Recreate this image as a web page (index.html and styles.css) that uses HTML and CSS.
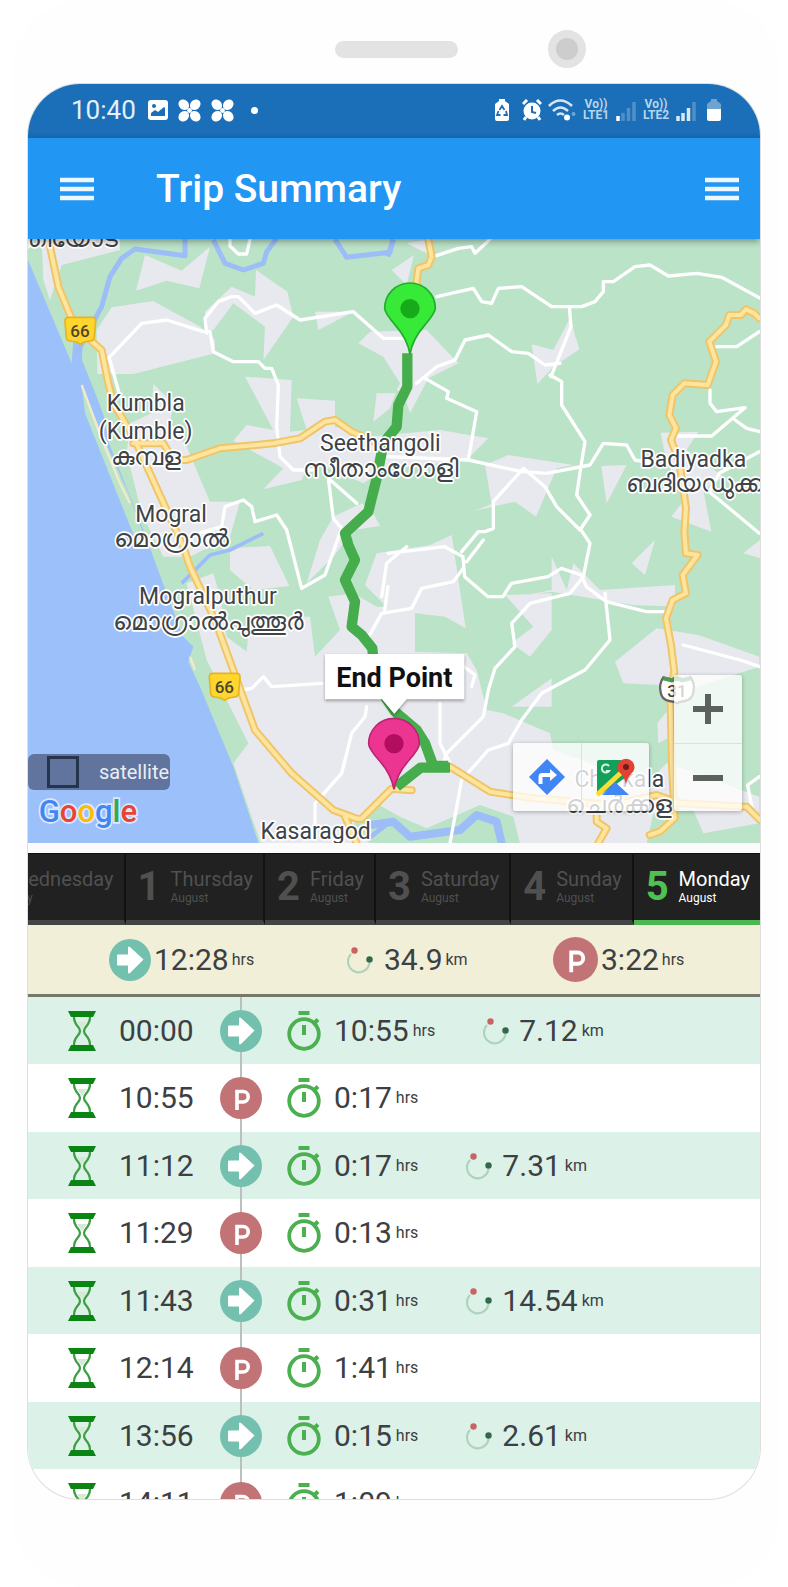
FILE: index.html
```html
<!DOCTYPE html>
<html lang="en">
<head>
<meta charset="utf-8">
<meta name="viewport" content="width=device-width, initial-scale=1">
<title>Trip Summary</title>
<link rel="stylesheet" href="styles.css">
</head>
<body>
<svg class="sprite" aria-hidden="true">
  <symbol id="menu" viewBox="0 0 34 24"><path d="M0 3h34M0 12h34M0 21h34" stroke="#fff" stroke-opacity=".92" stroke-width="4.4"/></symbol>
  <symbol id="move" viewBox="0 0 42 42"><circle cx="21" cy="21" r="21" fill="#74c0ae"/><path d="M8 16.500q0-1 1-1h10v-7q.5-1.500 2-.5l13.500 12.500-13.500 13.500q-1.500 1-2-.5v-7H9q-1 0-1-1z" fill="#fff"/></symbol>
  <symbol id="park" viewBox="0 0 42 42"><circle cx="21" cy="21" r="21" fill="#c27376"/><path d="M17 33V14.500h6a5 5 0 0 1 0 10.500h-6" fill="none" stroke="#fff" stroke-width="3.600"/></symbol>
  <symbol id="glass" viewBox="0 0 28 40"><path d="M0 0h28l-3 6H3zM0 40h28l-3-6H3z" fill="#0a8412"/><path d="M6 6c0 9 6 9 6 14s-6 5-6 14M22 6c0 9-6 9-6 14s6 5 6 14" fill="none" stroke="#3f9f45" stroke-width="2.300"/><path d="M9 11h10l-5 7z" fill="#d5e9d5"/></symbol>
  <symbol id="watch" viewBox="0 0 34 40"><circle cx="17" cy="23" r="14.800" fill="none" stroke="#4caf50" stroke-width="3.800"/><path d="M11.500 2h11M17 14v10M27 12.500l4-4" stroke="#4caf50" stroke-width="4"/></symbol>
  <symbol id="route" viewBox="0 0 26 28"><path d="M4 8A10.800 10.800 0 1 0 22.500 17" fill="none" stroke="#aed3bc" stroke-width="2.200"/><circle cx="7.500" cy="4.500" r="3.200" fill="#cb6363"/><circle cx="22.500" cy="13.500" r="3.200" fill="#32694b"/></symbol>
  <symbol id="clover" viewBox="0 0 24 24"><g fill="#fff"><ellipse cx="6" cy="6" rx="5" ry="6" transform="rotate(-45 6 6)"/><ellipse cx="18" cy="6" rx="5" ry="6" transform="rotate(45 18 6)"/><ellipse cx="6" cy="18" rx="5" ry="6" transform="rotate(45 6 18)"/><ellipse cx="18" cy="18" rx="5" ry="6" transform="rotate(-45 18 18)"/><circle cx="12" cy="12" r="2.500"/></g></symbol>
</svg>

<div class="phone">
  <div class="bezel"><span class="speaker"></span><span class="camera"></span></div>
  <main class="screen">
    <div class="status">
      <span class="clock">10:40</span>
      <svg class="st-image" viewBox="0 0 20 20"><rect width="20" height="20" rx="3" fill="#fff"/><circle cx="6" cy="6" r="2" fill="#1a6fb8"/><path d="M3 16v-3l4-3 3 2 6-5 1 1v8z" fill="#1a6fb8"/></svg>
      <svg class="st-clover"><use href="#clover"/></svg>
      <svg class="st-clover"><use href="#clover"/></svg>
      <span class="more-dot"></span>
      <div class="status-right">
        <svg class="w16" viewBox="0 0 16 22"><path d="M5 0h6v2l4 3v15q0 2-2 2H3q-2 0-2-2V5l4-3z" fill="#fff"/><path d="M5.500 11L8 7l2.500 4M12 12l1 4H9.500M6.500 16H3l1.500-4" fill="none" stroke="#1a6fb8" stroke-width="1.800"/></svg>
        <svg class="w20" viewBox="0 0 20 22"><circle cx="10" cy="12" r="8.500" fill="#fff"/><path d="M1 5l4-4M19 5l-4-4M4 18l-2 3M16 18l2 3" stroke="#fff" stroke-width="3"/><path d="M10 7v6l4 1" fill="none" stroke="#1a6fb8" stroke-width="2"/></svg>
        <svg class="w28" viewBox="0 0 28 22"><g fill="none" stroke="#d5e5f3" stroke-width="2.600"><path d="M1 7q11-11 23 0"/><path d="M5 12q7.500-7 15 0"/><path d="M9 16q3.500-3 7 0"/></g><circle cx="19" cy="18.500" r="3" fill="#fff"/><circle cx="25.500" cy="15" r="2" fill="#6fa5d3"/></svg>
        <span class="lte"><b>Vo))</b><b>LTE1</b></span>
        <svg class="w20" viewBox="0 0 20 22"><path d="M2 17v5" stroke="#fff" stroke-width="3.500"/><path d="M7 14v8M12.500 9v13M18 3v19" stroke="#528fc6" stroke-width="3.500"/></svg>
        <span class="lte"><b>Vo))</b><b>LTE2</b></span>
        <svg class="w20" viewBox="0 0 20 22"><path d="M2 17v5M7 14v8M12.500 9v13" stroke="#dbe8f4" stroke-width="3.500"/><path d="M18 3v19" stroke="#528fc6" stroke-width="3.500"/></svg>
        <svg class="w16 battery" viewBox="0 0 16 22"><path d="M5 0h6v2l4 3v5H1V5l4-3z" fill="#6fa3d0"/><path d="M1 10h14v10q0 2-2 2H3q-2 0-2-2z" fill="#fff"/></svg>
      </div>
    </div>

    <header class="appbar">
      <button class="menu" aria-label="Open navigation"><svg><use href="#menu"/></svg></button>
      <h1>Trip Summary</h1>
      <button class="menu" aria-label="Options"><svg><use href="#menu"/></svg></button>
    </header>

    <section class="map" aria-label="Trip map">
      <svg class="map-canvas" viewBox="84 27 2196 1812" preserveAspectRatio="xMidYMid slice">
        <defs>
          <g id="highways">
            <path d="M150 50l25 120 50 120 80 70 20 100 15 60 60 100 50 110 100 220 20 60 75 160 120 330 110 130 125 110 70 26h15l90-90 60 5M400 640h90l30 50h40l100-35 160-15 80-15 75-50 30-5 50 35 80 35M1035 1760l35 80M1285 28l10 52-10 25-30 10-6 45 20 30M2278 265l-15-15-25-12-15 17h-35l-10 30-50 50 20 60-25 70-70-5-35 35-10 60 20 40-15 35 25 65 20 140-5 70 5 65 35 5-45 60 10 55-40 20-20 55 15 80 10 80-12 60 5 220 8 160-45 40-30 10"/>
            <path d="M1350 1610l120 75 130 20 240 20 130-30 70 25 200 10 40 40M1790 1755v20l30 20-25 44"/>
          </g>
        </defs>
        <rect x="84" y="27" width="2196" height="1812" fill="#bbe3c8"/>
        <g fill="#e8e9ee">
          <path d="M435 75l110 47 85-72-32 125-98-23-92 30zM125 28h235v32l-175 45-35 105-20-60z"/>
          <path d="M335 232l125-19 140 77 45 40v40l-245 62H292l-2-132zM615 245l80-75 70 30 3-80 94 65 18 75-90 130 5-100-95-70-60 80h-25zM945 245h115l-105 55z"/>
          <path d="M1075 340l35-35 170-5 95 100-90 45-55 105-20-60-20-10-20 55-50 40 10-85h55l15-30-50-80zM1175 120l67-45-22 90zM1220 40l70-12v47z"/>
          <path d="M735 440l140 10-5 155 50-5-30-95 115 7v78l95 30 220-20 145 25-65 65-250 30-60 40-160-70-25 60-115 28 60-63-150-83 40-47 80 15z"/>
          <path d="M460 462l60 58-10 60 50 70 70 165h90l-30 105-120 60-80 0-65-130-45-180 10-90 65-30z"/>
          <path d="M1085 820l30 20 25 48-80 12-60 80-80 80 40-130 40-70z"/>
          <path d="M1455 705l70-30 195 30-50 10-62 145-63-45-120 27 50-20zM1595 343l65 17 50-95 28 93-78 52-48 52zM1804 708l76-3-60 115z"/>
          <path d="M1982 608l113-3-35 55 110 80-60 40 24 125-120-45 46-60-60-100z"/>
          <path d="M690 955l120-7 58 120-108 12-70-60zM1095 1065l35-95 160-25 65-30 15 100 27 180-62-35-166-20z"/>
          <path d="M1655 980l45 100 20-80 80 80 225-15v65l-125-5-245-40-75 10 75-15zM1515 1095l140-5v110l-65 80-55-40 65-50zM1535 1430l120-85v85zM1845 1295l125-100 125 20 183 65v30l-188 60-220-10zM1895 1000l70-70-30 105zM2230 970l50-40v55zM1972 1480l48-60-10 100-35 20z"/>
          <path d="M700 1600l45-60-125-250-60-230 80-30 20 70 20 120 60 45 10-105h180l15 120 75-80-35-100 75-10 70 40h115v135l155 5 30 50 30 120 50 10 140 60 10 50 140 50 160 30 40-40 60 20 218 80v80l-168 30-30-70-120 10-20 89H782z"/>
        </g>
        <path d="M1055 1790l65-75 80 45 80 35 160-70 100 35 20 79H1110z" fill="#bbe3c8"/>
        <path d="M84 90l131 310 5-70h28l-2 60 44 110 22 60 15 80 103 260 70 190 50 130 30 30-15 45 35 75 100 240 82 249H84z" fill="#9cc0f9"/>
        <path d="M245 465l55 135 85 190 60 160h-30l-80-200-80-200z" fill="#bbe3c8"/>
        <path d="M245 465l50 135 65 160 30 60M570 1280l15 40" fill="none" stroke="#f2eacb" stroke-width="7"/>
        <g fill="none" stroke="#9cbdf8" stroke-width="15" stroke-linejoin="round">
          <path d="M230 370l75-140 25-90 35-55 40-28 150 20V28M640 30l35 70 55 20 60-20 10-35 30-40M1005 28l35 54 130-15 10-39M1164 80l15-52"/>
          <path d="M545 1060l85-85 60-15 100-50" stroke-width="11"/>
          <path d="M1110 1785l70-10 50 45 150-20 50-45 60 20 20 85" stroke-width="24"/>
          <path d="M1100 1830l70-55" stroke-width="14"/>
        </g>
        <g fill="none" stroke="#fff" stroke-width="10" stroke-linejoin="round" stroke-linecap="round">
          <path d="M325 385l100-105 75-10 110 35h20l10 60 60 30h75l20 20h20l20 50-5 125 10 90 40 40h60M620 310l-5-45 40-50 40-15h20l50 50 65-25 70 45 160-25 90 80h60M690 28v20l25 24h25l10-44"/>
          <path d="M1300 80l75-25 40-5 10 20 45-42M1310 200l110-25 25 40 30 5 20-45 70-5 90 60h90l40-15 25-30v-30h30l65-45 45-5 55 33 85-8 75 12 120 65M1708 230l5 60-60 150M1250 460l60-50 55-20 30-60 70-15 70 50 50 5 50 35 45-5"/>
          <path d="M1275 445l70 40-5 20 90 40-25 145-240-10M1405 690l160 35 75 5 130-25 40-65 70 5 25 45 60 10M1650 435l35 20v70l70 110-10 60-15 100 40 60-30 45-70-70-35-60-65-55-90 100v80l-25 10h-20l-50 60"/>
          <path d="M2150 350h60l68-45M2130 480v40l20 25 85-12-100 85h-105M2205 570l35 25 40 10M2278 665l-120 65-30 55 150 125M1070 820l-85-75 15 120 25 30-50 140-70 40-45-175-30-45-65 20-10-45-25-20-55 20-10 60-70 20M330 390l30 110"/>
          <path d="M1164 970l170-20 55 30 5 60 70 60h45l25-40 110-20 40-25 60 20 15 35 60 45 120 30h60M1740 895l30 45-20 100-40 50-120 30-55 60 10 70-60 65-20 65-15 80-110 110-15 40M1815 1090l15 140-75 90-130 70-60 80-40 70-60 20-80 90-35 190M1390 1015l-30 40-95 20-30 60-90 15-50 90M1450 930l-50 65M1145 1100l15-100 60-50M1164 1070l-10 70M725 1380l30-5 35-35 25 30 150-10M1100 1430l-5 30-40 50-30 120-80 90v90M1320 1420v120l30 60M1380 1300l45 35-10 35M2050 1245l170 45 60 20M2278 1640l-35 25 15 80"/>
        </g>
        <use href="#highways" class="highway-edge"/>
        <use href="#highways" class="highway-core"/>
        <path d="M1222 370V470L1195 525 1190 590 1150 640 1130 745 1105 845 1035 910 1045 945 1065 990 1035 1050 1065 1115 1055 1190 1085 1215 1117 1255 1120 1290M1155 1400L1185 1445 1250 1500 1275 1540 1300 1608H1345M1190 1670L1262 1613H1350" fill="none" stroke="#45ad4b" stroke-width="31" stroke-linejoin="round"/>

        <g class="shield"><path d="M206 262h70q12 0 11 12l-4 48q-1 10-12 11l-18 3-12 7-12-7-18-3q-11-1-12-11l-4-48q-1-12 11-12z"/><text x="240" y="322">66</text></g>
        <g class="shield"><path d="M639 1330h70q12 0 11 12l-4 48q-1 10-12 11l-18 3-12 7-12-7-18-3q-11-1-12-11l-4-48q-1-12 11-12z"/><text x="673" y="1390">66</text></g>
        <path d="M1990 1342l25 6 16-6 16 6 25-6q14 20 8 45-3 22-26 26-15 2-23 7-8-5-23-7-23-4-26-26-6-25 8-45z" fill="#fff" stroke="#666" stroke-width="7"/>
        <path d="M1990 1345l25 6 16-6 16 6 25-6" fill="none" stroke="#4f9a4c" stroke-width="12"/>
        <text x="2031" y="1402" class="us-road">31</text>

        <g class="place">
          <text x="355" y="52" text-anchor="end" class="ml">ബന്തിയോട</text>
          <text x="437" y="543">Kumbla</text><text x="437" y="627">(Kumble)</text><text x="437" y="705" class="ml">കുമ്പള</text>
          <text x="513" y="877">Mogral</text><text x="513" y="950" class="ml">മൊഗ്രാൽ</text>
          <text x="1141" y="663">Seethangoli</text><text x="1141" y="740" class="ml">സീതാംഗോളി</text>
          <text x="624" y="1123">Mogralputhur</text><text x="624" y="1200" class="ml">മൊഗ്രാൽപുത്തൂർ</text>
          <text x="2080" y="712">Badiyadka</text><text x="2082" y="785" class="ml">ബദിയഡുക്ക</text>
          <text x="947" y="1828">Kasaragod</text>
          <text x="1858" y="1672">Cherkala</text><text x="1858" y="1750" class="ml">ചെർക്കള</text>
        </g>
        <text x="116" y="1776" class="brand"><tspan fill="#4285f4">G</tspan><tspan fill="#ea4335">o</tspan><tspan fill="#fbbc05">o</tspan><tspan fill="#4285f4">g</tspan><tspan fill="#34a853">l</tspan><tspan fill="#ea4335">e</tspan></text>

        <path d="M1230 372q-8-45-43-85-33-38-33-52a76 76 0 0 1 152 0q0 14-33 52-35 40-43 85z" fill="#37ea38" stroke="#20ad2a" stroke-width="5"/>
        <circle cx="1230" cy="236" r="29" fill="#17aa1b"/>
        <path d="M1182 1678q-8-45-43-85-33-38-33-52a76 76 0 0 1 152 0q0 14-33 52-35 40-43 85z" fill="#ec3591" stroke="#bd2474" stroke-width="5"/>
        <circle cx="1182" cy="1541" r="29" fill="#b30d60"/>
        <path class="callout" d="M975 1272h418v136h-173l-37 44-37-44H975z"/>
        <text x="1183" y="1372" class="callout-text">End Point</text>
      </svg>

      <label class="satellite"><input type="checkbox"><span>satellite</span></label>
      <div class="map-links">
        <button aria-label="Directions"><svg viewBox="0 0 36 36"><path d="M18 0l18 18-18 18L0 18z" fill="#4285f4"/><path d="M11.500 25v-7q0-2 2-2h10" fill="none" stroke="#fff" stroke-width="4"/><path d="M21 10l7 6-7 6z" fill="#fff"/></svg></button>
        <button aria-label="Open in Google Maps"><svg class="gmaps" viewBox="0 0 40 40"><path d="M1 5q0-2 2-2h22l7 16L4 38q-3 0-3-3z" fill="#12a05b"/><path d="M19 25l14 13H6z" fill="#4285f4"/><path d="M1 38l28-26" stroke="#fddd35" stroke-width="5"/><path d="M13 9a4 4 0 1 0 0 5h-3" fill="none" stroke="#d7f4e3" stroke-width="2"/><path d="M30 28q-1-7-5-11a8.500 8.500 0 1 1 10 0q-4 4-5 11z" fill="#e34133"/><circle cx="30" cy="10" r="3" fill="#6e1b1d"/></svg></button>
      </div>
      <div class="zoom">
        <button aria-label="Zoom in"><svg viewBox="0 0 30 30"><path d="M15 0v30M0 15h30" stroke="#5d615e" stroke-width="6"/></svg></button>
        <button aria-label="Zoom out"><svg viewBox="0 0 30 30"><path d="M0 15h30" stroke="#5d615e" stroke-width="6"/></svg></button>
      </div>
    </section>

    <nav class="days" aria-label="Day">
      <button class="day"><b>31</b><span>Wednesday<small>July</small></span></button>
      <button class="day"><b>1</b><span>Thursday<small>August</small></span></button>
      <button class="day"><b>2</b><span>Friday<small>August</small></span></button>
      <button class="day"><b>3</b><span>Saturday<small>August</small></span></button>
      <button class="day"><b>4</b><span>Sunday<small>August</small></span></button>
      <button class="day active" aria-current="date"><b>5</b><span>Monday<small>August</small></span></button>
    </nav>

    <section class="totals" aria-label="Totals">
      <div class="total"><svg class="badge"><use href="#move"/></svg><span class="value">12:28</span><small>hrs</small></div>
      <div class="total distance"><svg class="route"><use href="#route"/></svg><span class="value">34.9</span><small>km</small></div>
      <div class="total"><svg class="badge parked"><use href="#park"/></svg><span class="value">3:22</span><small>hrs</small></div>
    </section>

    <ul class="trips">
      <li><svg class="glass"><use href="#glass"/></svg><time>00:00</time><span class="stop"><svg class="badge"><use href="#move"/></svg></span><svg class="watch"><use href="#watch"/></svg><span class="value">10:55</span><small>hrs</small><svg class="route"><use href="#route"/></svg><span class="value">7.12</span><small>km</small></li>
      <li><svg class="glass"><use href="#glass"/></svg><time>10:55</time><span class="stop"><svg class="badge"><use href="#park"/></svg></span><svg class="watch"><use href="#watch"/></svg><span class="value">0:17</span><small>hrs</small></li>
      <li><svg class="glass"><use href="#glass"/></svg><time>11:12</time><span class="stop"><svg class="badge"><use href="#move"/></svg></span><svg class="watch"><use href="#watch"/></svg><span class="value">0:17</span><small>hrs</small><svg class="route"><use href="#route"/></svg><span class="value">7.31</span><small>km</small></li>
      <li><svg class="glass"><use href="#glass"/></svg><time>11:29</time><span class="stop"><svg class="badge"><use href="#park"/></svg></span><svg class="watch"><use href="#watch"/></svg><span class="value">0:13</span><small>hrs</small></li>
      <li><svg class="glass"><use href="#glass"/></svg><time>11:43</time><span class="stop"><svg class="badge"><use href="#move"/></svg></span><svg class="watch"><use href="#watch"/></svg><span class="value">0:31</span><small>hrs</small><svg class="route"><use href="#route"/></svg><span class="value">14.54</span><small>km</small></li>
      <li><svg class="glass"><use href="#glass"/></svg><time>12:14</time><span class="stop"><svg class="badge"><use href="#park"/></svg></span><svg class="watch"><use href="#watch"/></svg><span class="value">1:41</span><small>hrs</small></li>
      <li><svg class="glass"><use href="#glass"/></svg><time>13:56</time><span class="stop"><svg class="badge"><use href="#move"/></svg></span><svg class="watch"><use href="#watch"/></svg><span class="value">0:15</span><small>hrs</small><svg class="route"><use href="#route"/></svg><span class="value">2.61</span><small>km</small></li>
      <li><svg class="glass"><use href="#glass"/></svg><time>14:11</time><span class="stop"><svg class="badge"><use href="#park"/></svg></span><svg class="watch"><use href="#watch"/></svg><span class="value">1:09</span><small>hrs</small></li>
    </ul>
  </main>
</div>
</body>
</html>
```
FILE: styles.css
```css
* { box-sizing: border-box; }
body { margin: 0; background: #fff; font-family: Roboto, "Noto Sans", sans-serif; color: #3c4043; }
button { border: 0; padding: 0; background: none; font: inherit; color: inherit; }
svg { display: block; flex: none; }
.sprite { position: absolute; width: 0; height: 0; }

.phone { margin: 0 8px 0 12px; padding: 0 20px 88px 16px; border-radius: 72px; background: #fefefe; }
.bezel { height: 84px; padding: 30px 174px 0 0; display: flex; justify-content: flex-end; align-items: flex-start; gap: 90px; }
.speaker { width: 123px; height: 17px; margin-top: 11px; border-radius: 9px; background: #e3e3e3; }
.camera { width: 38px; height: 38px; border-radius: 50%; border: 8px solid #e3e3e3; background: #cdcdcd; }
.screen { overflow: hidden; border-radius: 52px; box-shadow: 0 0 0 1px #dedede; background: #fff; }

.status { height: 54px; padding: 0 38px 2px 43px; display: flex; align-items: center; background: #1a6fb8; color: #e6f0f8; }
.clock { font-size: 26px; }
.st-image { width: 20px; height: 20px; margin-left: 12px; }
.st-clover { width: 23px; height: 23px; margin-left: 10px; }
.more-dot { width: 7px; height: 7px; margin-left: 17px; border-radius: 50%; background: #fff; }
.status-right { margin-left: auto; display: flex; align-items: center; gap: 6px; }
.status-right svg { height: 22px; }
.w16 { width: 16px; margin-right: 6px; }
.w20 { width: 20px; }
.w28 { width: 28px; }
.status-right .battery { margin: 0 0 0 4px; }
.lte { width: 28px; display: flex; flex-direction: column; align-items: center; font-size: 12px; line-height: 11px; color: #b9d4ea; }

.appbar { position: relative; z-index: 1; height: 101px; padding: 0 21px 0 32px; display: flex; align-items: center; background: #2196f3; box-shadow: 0 2px 7px rgba(0, 0, 0, .4); color: #fff; }
.appbar h1 { margin: 0 auto 0 62px; font-size: 39px; font-weight: 500; line-height: 48px; }
.menu svg { width: 34px; height: 24px; }

.map { position: relative; border-bottom: 10px solid #fbfbfb; }
.map-canvas { width: 100%; height: auto; }
.highway-edge, .highway-core { fill: none; stroke-linejoin: round; stroke-linecap: round; }
.highway-edge { stroke: #f0c56a; stroke-width: 24px; }
.highway-core { stroke: #fde59d; stroke-width: 12px; }
.place text { font-size: 69px; text-anchor: middle; fill: #3e4347; stroke: #fff; stroke-width: 10px; stroke-linejoin: round; paint-order: stroke; }
.place .ml { font-size: 75px; }
.place text[text-anchor="end"] { text-anchor: end; }
.shield path { fill: #ffd52e; stroke: #e4b423; stroke-width: 5px; }
.shield text, .us-road { font-size: 51px; font-weight: 500; text-anchor: middle; fill: #4b4630; }
.brand { font-size: 93px; font-weight: 500; stroke: #dce9fd; stroke-width: 10px; paint-order: stroke; }
.callout { fill: #fff; filter: drop-shadow(0 5px 5px rgba(0, 0, 0, .35)); }
.callout-text { font-size: 81px; font-weight: 700; text-anchor: middle; fill: #111; }

.satellite { position: absolute; left: 0; bottom: 53px; width: 142px; height: 36px; padding-left: 19px; display: flex; align-items: center; gap: 20px; border-radius: 6px; background: #60749d; color: #e9edf4; font-size: 20px; }
.satellite input { appearance: none; width: 32px; height: 32px; margin: 0; border: 3px solid #24344c; flex: none; }
.map-links, .zoom { position: absolute; bottom: 32px; display: flex; border-radius: 3px; background: rgba(255, 255, 255, .76); box-shadow: 0 1px 4px rgba(0, 0, 0, .3); }
.map-links { right: 111px; }
.zoom { right: 18px; flex-direction: column; }
.map-links button, .zoom button { width: 68px; height: 68px; display: grid; place-items: center; }
.map-links button + button { border-left: 1px solid #d9e2dc; }
.zoom button + button { border-top: 1px solid #d9e2dc; }
.map-links svg { width: 36px; height: 36px; }
.map-links .gmaps { width: 40px; height: 40px; }
.zoom svg { width: 30px; height: 30px; }

.days { height: 72px; display: flex; justify-content: flex-end; overflow: hidden; background: #212121; border-top: 1px solid #101010; }
.day { flex: none; padding: 0 10px 0 12px; display: flex; align-items: center; gap: 10px; border-right: 2px solid #111; border-bottom: 5px solid #444; color: #505050; text-align: left; font-size: 20px; line-height: 22px; }
.day b { font-size: 40px; line-height: 48px; }
.day small { display: block; font-size: 12px; line-height: 16px; }
.day.active { margin-right: -2px; border-bottom-color: #4cb950; color: #fff; }
.day.active b { color: #4fc153; }

.value, time { font-size: 30px; line-height: 36px; }
small { font-size: 16px; line-height: 20px; }
.badge { width: 42px; height: 42px; }
.badge.parked { width: 45px; height: 45px; }
.route { width: 26px; height: 28px; }

.totals { height: 72px; padding-left: 81px; display: grid; grid-template-columns: 238fr 206fr 207fr; align-items: center; background: #f1efd7; border-bottom: 3px solid #77776b; }
.total { display: flex; align-items: center; gap: 3px; }
.total .route { margin-right: 8px; }

.trips { height: 502px; margin: 0; padding: 0; overflow: hidden; list-style: none; }
.trips li { height: 67px; padding-left: 40px; display: flex; align-items: center; }
.trips li:nth-child(odd) { background: #dcf2e8; }
.trips li:nth-child(even) { height: 68px; }
.glass { width: 28px; height: 40px; margin-right: 23px; }
.trips time { width: 76px; }
.stop { position: relative; align-self: stretch; margin: 0 25px; display: flex; align-items: center; }
.stop::before { content: ""; position: absolute; left: 20px; top: 0; bottom: 0; width: 2px; background: #b9c0bd; }
.stop .badge { position: relative; }
.watch { width: 34px; height: 40px; margin-right: 13px; }
.trips small { margin-left: 4px; }
.trips .route { margin: 0 10px 0 48px; }
```
